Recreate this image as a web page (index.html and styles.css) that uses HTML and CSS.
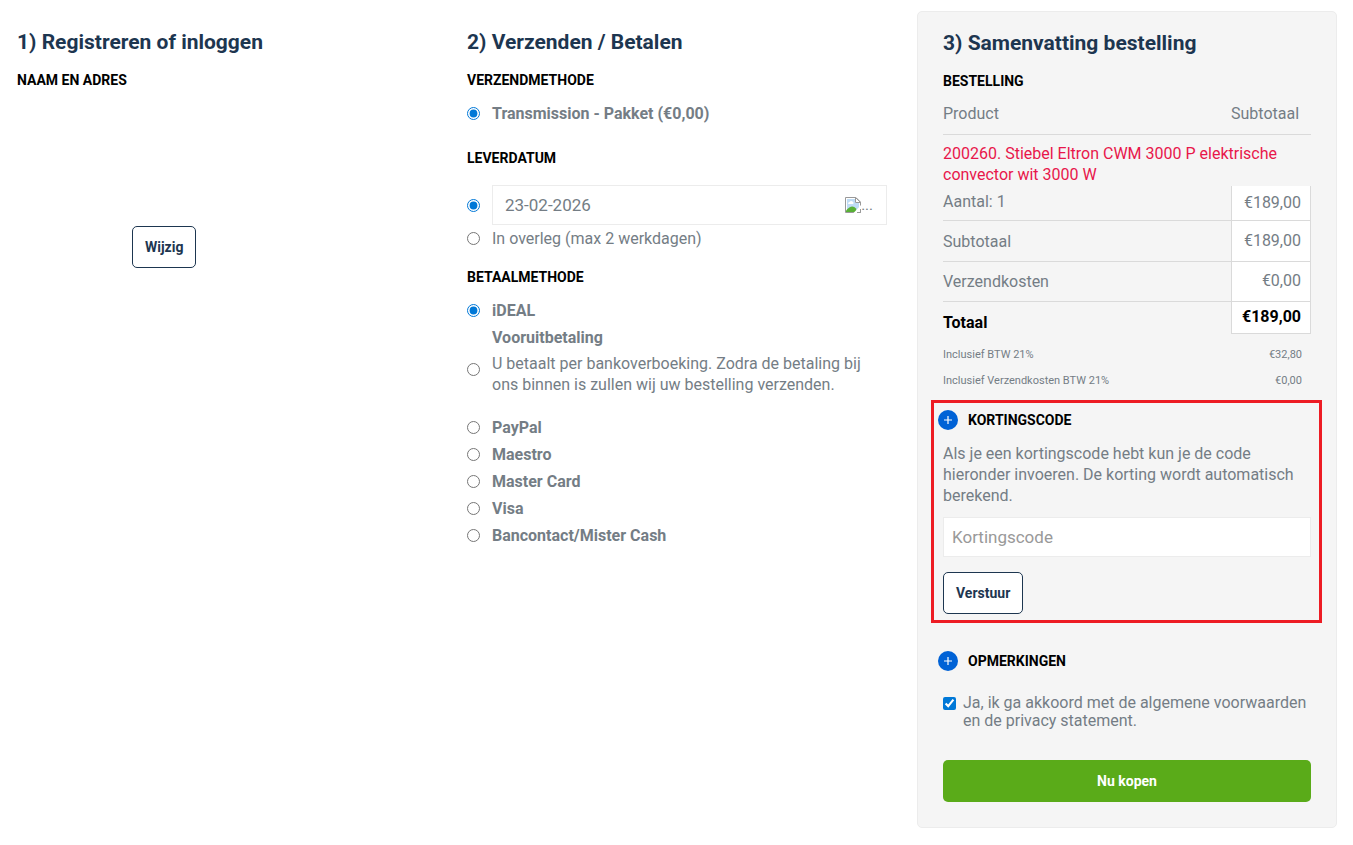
FILE: index.html
```html
<!DOCTYPE html>
<html lang="nl">
<head>
<meta charset="utf-8">
<meta name="viewport" content="width=device-width, initial-scale=1">
<title>Bestellen</title>
<link rel="stylesheet" href="styles.css">
</head>
<body>
<main class="checkout">
  <section class="column">
    <h2 class="step-title">1) Registreren of inloggen</h2>
    <h3 class="label">Naam en adres</h3>
    <div class="address">
      <button type="button" class="btn">Wijzig</button>
    </div>
  </section>

  <section class="column">
    <h2 class="step-title">2) Verzenden / Betalen</h2>
    <h3 class="label">Verzendmethode</h3>
    <div class="options">
      <div class="option"><input type="radio" name="shipping" id="ship-1" checked><label for="ship-1">Transmission - Pakket (€0,00)</label></div>
    </div>

    <h3 class="label label-date">Leverdatum</h3>
    <div class="options">
      <div class="option">
        <input type="radio" name="delivery" id="date-1" aria-label="Leverdatum kiezen" checked>
        <div class="date-field">
          <input type="text" class="date-input" value="23-02-2026" aria-label="Leverdatum">
          <button type="button" class="date-picker" aria-label="Kalender openen">
            <svg width="16" height="16" viewBox="0 0 16 16" aria-hidden="true">
              <path d="M.5 .5H11L15.5 5V15.5H.5Z" fill="#fff" stroke="#999"/>
              <path d="M2 2H10V6H14V14H2Z" fill="#bfdcf5"/>
              <path d="M3 6.5a1.5 1.5 0 0 1 1.5-1.5a2 2 0 0 1 3.5 0a1.2 1.2 0 0 1 0 2H3.5Z" fill="#fff"/>
              <path d="M1 15V13.5Q7 6.500 11 11.500L12 15Z" fill="#58b036"/>
              <path d="M10.500 .5V5.500H15.500Z" fill="#fff" stroke="#999"/>
              <path d="M8.500 16L16 8V11.500L12 16Z" fill="#fff"/>
              <path d="M12 15.500H15.500V12" fill="none" stroke="#999"/>
            </svg><span>...</span>
          </button>
        </div>
      </div>
      <div class="option option-plain"><input type="radio" name="delivery" id="date-2"><label for="date-2">In overleg (max 2 werkdagen)</label></div>
    </div>

    <h3 class="label label-payment">Betaalmethode</h3>
    <div class="options">
      <div class="option"><input type="radio" name="payment" id="pay-1" checked><label for="pay-1">iDEAL</label></div>
      <div class="option">
        <input type="radio" name="payment" id="pay-2">
        <label for="pay-2">Vooruitbetaling<span class="option-note">U betaalt per bankoverboeking. Zodra de betaling bij ons binnen is zullen wij uw bestelling verzenden.</span></label>
      </div>
      <div class="option"><input type="radio" name="payment" id="pay-3"><label for="pay-3">PayPal</label></div>
      <div class="option"><input type="radio" name="payment" id="pay-4"><label for="pay-4">Maestro</label></div>
      <div class="option"><input type="radio" name="payment" id="pay-5"><label for="pay-5">Master Card</label></div>
      <div class="option"><input type="radio" name="payment" id="pay-6"><label for="pay-6">Visa</label></div>
      <div class="option"><input type="radio" name="payment" id="pay-7"><label for="pay-7">Bancontact/Mister Cash</label></div>
    </div>
  </section>

  <section class="column summary">
    <h2 class="step-title">3) Samenvatting bestelling</h2>
    <h3 class="label">Bestelling</h3>
    <table class="order">
      <thead>
        <tr><th scope="col">Product</th><th scope="col">Subtotaal</th></tr>
      </thead>
      <tbody>
        <tr class="order-name"><td colspan="2"><a href="#">200260. Stiebel Eltron CWM 3000 P elektrische convector wit 3000 W</a></td></tr>
        <tr class="order-count"><td>Aantal: 1</td><td class="price">€189,00</td></tr>
        <tr class="order-row"><td>Subtotaal</td><td class="price">€189,00</td></tr>
        <tr class="order-row order-shipping"><td>Verzendkosten</td><td class="price">€0,00</td></tr>
        <tr class="order-total"><td>Totaal</td><td class="price">€189,00</td></tr>
      </tbody>
    </table>
    <table class="taxes">
      <tbody>
        <tr><td>Inclusief BTW 21%</td><td>€32,80</td></tr>
        <tr><td>Inclusief Verzendkosten BTW 21%</td><td>€0,00</td></tr>
      </tbody>
    </table>

    <form class="coupon">
      <h3 class="label toggle-label"><button type="button" class="toggle" aria-expanded="true"><span class="toggle-icon"><svg width="8" height="8" viewBox="0 0 8 8" aria-hidden="true"><path d="M4 0V8M0 4H8" stroke="#fff" stroke-width="1.2"/></svg></span>Kortingscode</button></h3>
      <div class="coupon-body">
        <p class="coupon-text">Als je een kortingscode hebt kun je de code hieronder invoeren. De korting wordt automatisch berekend.</p>
        <input type="text" class="coupon-input" placeholder="Kortingscode" aria-label="Kortingscode">
        <button type="button" class="btn">Verstuur</button>
      </div>
    </form>

    <h3 class="label toggle-label remarks"><button type="button" class="toggle" aria-expanded="false"><span class="toggle-icon"><svg width="8" height="8" viewBox="0 0 8 8" aria-hidden="true"><path d="M4 0V8M0 4H8" stroke="#fff" stroke-width="1.2"/></svg></span>Opmerkingen</button></h3>

    <div class="terms">
      <input type="checkbox" id="terms" checked>
      <label for="terms">Ja, ik ga akkoord met de algemene voorwaarden en de privacy statement.</label>
    </div>
    <button type="submit" class="buy">Nu kopen</button>
  </section>
</main>
</body>
</html>
```
FILE: styles.css
```css
* {
  box-sizing: border-box;
}

body {
  margin: 0;
  background: #fff;
  color: #747d85;
  font: 16px/21px Roboto, "Liberation Sans", sans-serif;
}

button,
input {
  font-family: inherit;
}

input[type="radio"],
input[type="checkbox"] {
  flex: none;
  width: 13px;
  height: 13px;
  margin: 0;
  accent-color: #0078d7;
}

.checkout {
  display: grid;
  grid-template-columns: repeat(3, minmax(0, 1fr));
  align-items: start;
  gap: 30px;
  padding: 11px 16px 11px 17px;
}

.column {
  padding-top: 19px;
}

.step-title {
  margin: 0 0 16px;
  color: #1d3650;
  font-size: 21px;
  font-weight: 700;
  line-height: 24px;
}

.label {
  margin: 0 0 10px;
  color: #000;
  font-size: 14px;
  font-weight: 700;
  line-height: 20px;
  text-transform: uppercase;
}

.btn {
  height: 42px;
  padding: 0 12px;
  border: 1px solid #1d3650;
  border-radius: 5px;
  background: #fff;
  color: #1d3650;
  font-size: 14px;
  font-weight: 700;
}

.address {
  padding: 126px 115px 0;
}

/* Shipping and payment choices */

.option {
  display: flex;
  align-items: center;
  gap: 12px;
  font-weight: 700;
  line-height: 27px;
}

.option-plain {
  font-weight: 400;
}

.option-note {
  display: block;
  padding: 2px 16px 19px 0;
  font-weight: 400;
  line-height: 21px;
}

.label-date {
  margin: 21px 0 17px;
}

.label-payment {
  margin-top: 15px;
}

.date-field {
  display: flex;
  flex: 1;
  align-items: center;
  height: 40px;
  padding: 0 13px 0 12px;
  border: 1px solid #ececec;
}

.date-input {
  flex: 1;
  min-width: 0;
  padding: 0;
  border: 0;
  color: #747d85;
  font-size: 17px;
}

.date-picker {
  display: flex;
  align-items: end;
  padding: 0;
  border: 0;
  background: none;
  color: #747d85;
  font-size: 15px;
  line-height: 16px;
}

/* Order summary */

.summary {
  padding: 19px 25px 25px;
  border: 1px solid #ececec;
  border-radius: 5px;
  background: #f5f5f5;
}

.order,
.taxes {
  width: 100%;
  border-spacing: 0;
  text-align: left;
}

.order td,
.order th,
.taxes td {
  padding: 0;
}

.order th {
  height: 34px;
  padding-bottom: 8px;
  border-bottom: 1px solid #dadada;
  font-weight: 400;
}

.order th:last-child {
  width: 80px;
}

.order-name td {
  height: 51px;
  padding-top: 8px;
  vertical-align: top;
}

.order-name a {
  color: #e8174b;
  text-decoration: none;
}

.order-count td,
.order-row td {
  border-bottom: 1px solid #dadada;
}

.order-count td {
  height: 35px;
  padding-bottom: 4px;
}

.order-row td {
  height: 41px;
}

.order-shipping td {
  height: 40px;
}

.order .price {
  padding-right: 9px;
  padding-bottom: 2px;
  border-right: 1px solid #dadada;
  border-left: 1px solid #dadada;
  background: #fff;
  text-align: right;
}

.order-total td {
  height: 32px;
  padding-top: 8px;
  color: #000;
  font-weight: 700;
}

.order-total .price {
  padding-top: 0;
  border-bottom: 1px solid #dadada;
}

.taxes {
  margin-top: 7px;
  font-size: 11px;
}

.taxes td {
  height: 26px;
}

.taxes td:last-child {
  padding-right: 9px;
  text-align: right;
}

.coupon {
  margin: 7px -11px 0 -12px;
  padding: 7px 8px 6px 9px;
  border: 3px solid #ed1c24;
}

.toggle-label {
  margin: 0 0 13px -5px;
}

.toggle {
  display: flex;
  align-items: center;
  gap: 10px;
  padding: 0;
  border: 0;
  background: none;
  color: inherit;
  font-size: inherit;
  font-weight: inherit;
  line-height: 20px;
  text-transform: inherit;
}

.toggle-icon {
  display: grid;
  place-items: center;
  width: 20px;
  height: 20px;
  border-radius: 50%;
  background: #0062d6;
}

.coupon-text {
  margin: 0 0 11px;
}

.coupon-input {
  display: block;
  width: 100%;
  height: 40px;
  margin-bottom: 15px;
  padding: 0 8px;
  border: 1px solid #ececec;
  background: #fff;
  font-size: 17px;
}

.coupon-input::placeholder {
  color: #999;
}

.remarks {
  margin-top: 28px;
  margin-bottom: 23px;
}

.terms {
  display: flex;
  gap: 7px;
  line-height: 18px;
}

.terms input {
  margin-top: 3px;
}

.buy {
  display: block;
  width: 100%;
  height: 42px;
  margin-top: 30px;
  border: 0;
  border-radius: 5px;
  background: #5aab19;
  color: #fff;
  font-size: 14px;
  font-weight: 700;
}
```
